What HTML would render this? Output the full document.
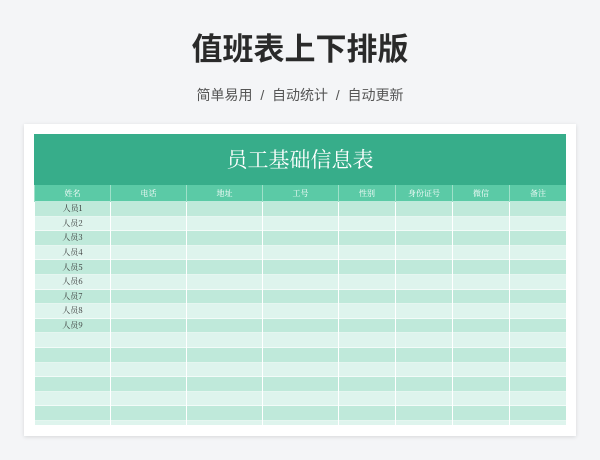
<!DOCTYPE html><html><head><meta charset="utf-8"><style>
body{margin:0;width:600px;height:460px;background:#f4f5f7;font-family:"Liberation Sans","Noto Sans CJK SC",sans-serif;position:relative;overflow:hidden}
.t{position:absolute;left:0;width:600px;top:24px;text-align:center;font-size:31px;font-weight:bold;color:#2a2a2a;letter-spacing:0px}
.s{position:absolute;left:0;width:600px;top:85px;text-align:center;font-size:14px;color:#555}
.card{position:absolute;left:24px;top:124px;width:552px;height:312px;background:#fff;box-shadow:0 1px 4px rgba(0,0,0,.12)}
.hd{position:absolute;left:34px;top:134px;width:532px;height:51px;background:#37ad8a;color:#fff;font-size:21px;text-align:center;line-height:51px;font-family:"Noto Serif CJK SC",serif}
table{position:absolute;left:34px;top:185px;width:532px;border-collapse:collapse;table-layout:fixed;font-family:"Noto Serif CJK SC",serif}
td{border:1px solid #fff;border-top:none;border-bottom:none;height:14.6px;padding:0;font-size:8px;text-align:center;color:#333;line-height:14px}
tr.h td{background:#5bcaa6;color:#fff;height:17px;line-height:17px;border-color:#9ee0c9}
tr:nth-child(even) td{background:#bfe9da}
tr:nth-child(odd):not(.h) td{background:#def4ed}
tr td{box-shadow:inset 0 -1px 0 rgba(255,255,255,.6)}
</style></head><body>
<div class="t">值班表上下排版</div>
<div class="s">简单易用 &nbsp;/&nbsp; 自动统计 &nbsp;/&nbsp; 自动更新</div>
<div class="card"></div>
<div class="hd">员工基础信息表</div>
<div style="position:absolute;left:34px;top:185px;width:532px;height:240px;overflow:hidden">
<table style="left:0;top:0">
<colgroup><col style="width:76px"><col style="width:76px"><col style="width:76px"><col style="width:76px"><col style="width:57px"><col style="width:57px"><col style="width:57px"><col style="width:57px"></colgroup>
<tr class="h"><td>姓名</td><td>电话</td><td>地址</td><td>工号</td><td>性别</td><td>身份证号</td><td>微信</td><td>备注</td></tr>
<tr><td>人员1</td><td></td><td></td><td></td><td></td><td></td><td></td><td></td></tr>
<tr><td>人员2</td><td></td><td></td><td></td><td></td><td></td><td></td><td></td></tr>
<tr><td>人员3</td><td></td><td></td><td></td><td></td><td></td><td></td><td></td></tr>
<tr><td>人员4</td><td></td><td></td><td></td><td></td><td></td><td></td><td></td></tr>
<tr><td>人员5</td><td></td><td></td><td></td><td></td><td></td><td></td><td></td></tr>
<tr><td>人员6</td><td></td><td></td><td></td><td></td><td></td><td></td><td></td></tr>
<tr><td>人员7</td><td></td><td></td><td></td><td></td><td></td><td></td><td></td></tr>
<tr><td>人员8</td><td></td><td></td><td></td><td></td><td></td><td></td><td></td></tr>
<tr><td>人员9</td><td></td><td></td><td></td><td></td><td></td><td></td><td></td></tr>
<tr><td></td><td></td><td></td><td></td><td></td><td></td><td></td><td></td></tr>
<tr><td></td><td></td><td></td><td></td><td></td><td></td><td></td><td></td></tr>
<tr><td></td><td></td><td></td><td></td><td></td><td></td><td></td><td></td></tr>
<tr><td></td><td></td><td></td><td></td><td></td><td></td><td></td><td></td></tr>
<tr><td></td><td></td><td></td><td></td><td></td><td></td><td></td><td></td></tr>
<tr><td></td><td></td><td></td><td></td><td></td><td></td><td></td><td></td></tr>
<tr><td></td><td></td><td></td><td></td><td></td><td></td><td></td><td></td></tr>
</table></div>
</body></html>
